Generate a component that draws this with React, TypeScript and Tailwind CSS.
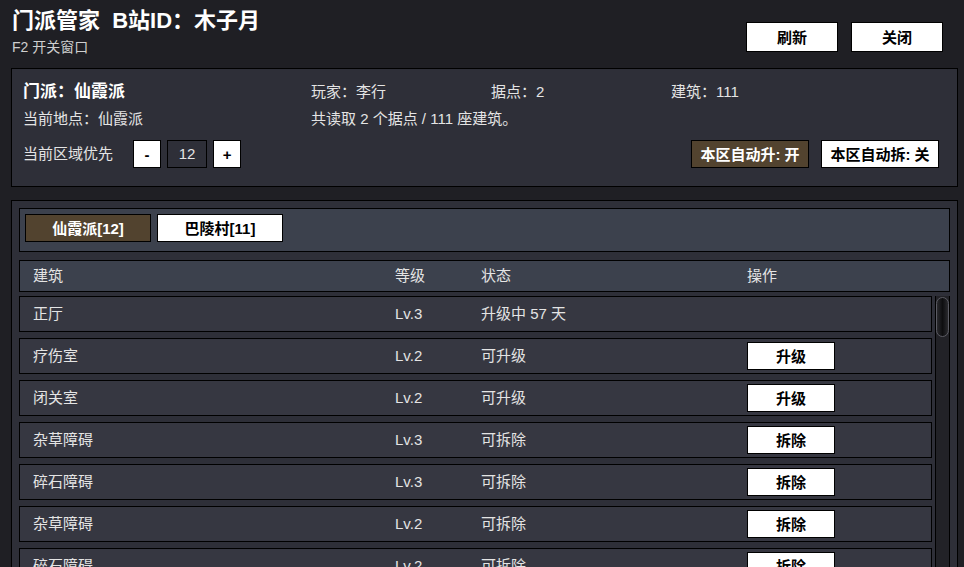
import React from 'react';

const FONT = { fontFamily: '"Liberation Sans", "Noto Sans CJK SC", sans-serif' };

type Row = { name: string; level: string; status: string; action?: string };

const rows: Row[] = [
  { name: '正厅', level: 'Lv.3', status: '升级中 57 天' },
  { name: '疗伤室', level: 'Lv.2', status: '可升级', action: '升级' },
  { name: '闭关室', level: 'Lv.2', status: '可升级', action: '升级' },
  { name: '杂草障碍', level: 'Lv.3', status: '可拆除', action: '拆除' },
  { name: '碎石障碍', level: 'Lv.3', status: '可拆除', action: '拆除' },
  { name: '杂草障碍', level: 'Lv.2', status: '可拆除', action: '拆除' },
  { name: '碎石障碍', level: 'Lv.2', status: '可拆除', action: '拆除' },
  { name: '杂草障碍', level: 'Lv.1', status: '可拆除', action: '拆除' },
];

function WhiteButton({ children, className = '' }: { children: React.ReactNode; className?: string }) {
  return (
    <button
      className={`flex items-center justify-center bg-white border border-black text-black font-bold text-[15px] leading-none ${className}`}
    >
      {children}
    </button>
  );
}

export default function App() {
  return (
    <div className="h-[567px] w-[964px] overflow-hidden bg-[#1f1f24] text-[#e4e4e4] flex flex-col" style={FONT}>
      {/* Header */}
      <header className="h-[68px] shrink-0 flex justify-between pl-[12px] pr-[21px]">
        <div className="pt-[5px]">
          <h1 className="text-[22px] leading-[31px] font-bold text-white">门派管家&nbsp;&nbsp;B站ID：木子月</h1>
          <div className="text-[14px] leading-[20px] text-[#cfcfcf] mt-[1px]">F2 开关窗口</div>
        </div>
        <div className="flex gap-[13px] pt-[22px]">
          <WhiteButton className="w-[92px] h-[30px]">刷新</WhiteButton>
          <WhiteButton className="w-[92px] h-[30px]">关闭</WhiteButton>
        </div>
      </header>

      {/* Info panel */}
      <section className="ml-[11px] mr-[6px] h-[119px] shrink-0 border border-black bg-[#2e2f38] pl-[11px] pr-[18px] pt-[10px] text-[15px]">
        <div className="h-[22px] grid grid-cols-[288px_180px_180px_1fr] items-center">
          <div className="text-[17px] font-bold text-white">门派：仙霞派</div>
          <div>玩家：李行</div>
          <div>据点：2</div>
          <div>建筑：111</div>
        </div>
        <div className="h-[22px] mt-[7px] grid grid-cols-[288px_1fr] items-center">
          <div>当前地点：仙霞派</div>
          <div>共读取 2 个据点 / 111 座建筑。</div>
        </div>
        <div className="h-[28px] mt-[10px] flex items-center justify-between">
          <div className="flex items-center">
            <span className="mr-[20px]">当前区域优先</span>
            <WhiteButton className="w-[28px] h-[28px]">-</WhiteButton>
            <div className="w-[40px] h-[28px] mx-[6px] flex items-center justify-center border border-black bg-[#2e2f38] text-[15px]">
              12
            </div>
            <WhiteButton className="w-[28px] h-[28px]">+</WhiteButton>
          </div>
          <div className="flex gap-[12px]">
            <button className="w-[118px] h-[28px] flex items-center justify-center border border-black bg-[#52432f] text-white font-bold text-[15px] leading-none">
              本区自动升: 开
            </button>
            <WhiteButton className="w-[118px] h-[28px]">本区自动拆: 关</WhiteButton>
          </div>
        </div>
      </section>

      {/* Main panel */}
      <section className="ml-[11px] mr-[6px] mt-[13px] flex-1 min-h-0 border border-b-0 border-black bg-[#2e2f38] pt-[7px] pl-[7px] pr-[7px] flex flex-col">
        {/* Tabs */}
        <div className="h-[44px] shrink-0 border border-black bg-[#3c414d] flex gap-[6px] pt-[5px] pl-[5px]">
          <button className="w-[126px] h-[28px] flex items-center justify-center border border-black bg-[#52432f] text-white font-bold text-[15px] leading-none">
            仙霞派[12]
          </button>
          <WhiteButton className="w-[126px] h-[28px]">巴陵村[11]</WhiteButton>
        </div>

        {/* Table header */}
        <div className="h-[32px] mt-[8px] shrink-0 border border-black bg-[#3c414d] pl-[13px] grid grid-cols-[362px_86px_266px_1fr] items-center text-[15px]">
          <div>建筑</div>
          <div>等级</div>
          <div>状态</div>
          <div>操作</div>
        </div>

        {/* Rows + scrollbar */}
        <div className="mt-[4px] flex-1 min-h-0 flex gap-[3px] overflow-hidden">
          <div className="flex-1 flex flex-col gap-[6px]">
            {rows.map((r, i) => (
              <div
                key={i}
                className="h-[36px] shrink-0 border border-black bg-[#363741] pl-[13px] grid grid-cols-[362px_86px_266px_1fr] items-center text-[15px]"
              >
                <div>{r.name}</div>
                <div>{r.level}</div>
                <div>{r.status}</div>
                <div>{r.action && <WhiteButton className="w-[88px] h-[28px]">{r.action}</WhiteButton>}</div>
              </div>
            ))}
          </div>
          <div className="w-[15px] shrink-0 border-x border-black bg-[#222227] relative">
            <div className="absolute left-0 right-0 top-[1px] h-[40px] rounded-full border border-[#5a5a62] bg-gradient-to-r from-[#2a2a2e] via-[#0e0e10] to-[#2a2a2e]" />
          </div>
        </div>
      </section>
    </div>
  );
}
